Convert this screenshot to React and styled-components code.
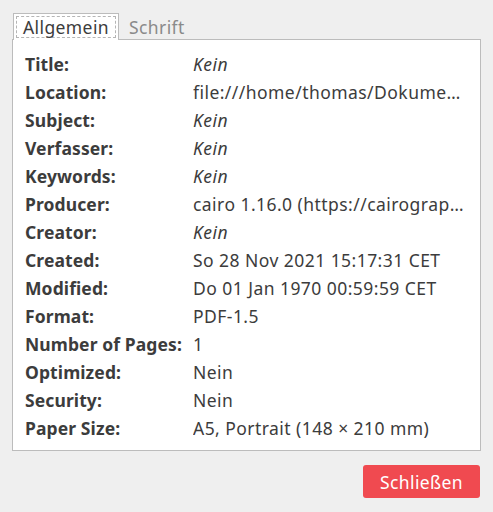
import React from "react";
import styled, { createGlobalStyle } from "styled-components";

const Global = createGlobalStyle`
  html, body { margin: 0; padding: 0; background: #efefef; }
  body { font-family: "Noto Sans", "DejaVu Sans", sans-serif; color: #3c3c3c; }
`;

const Window = styled.div`
  width: 493px;
  height: 512px;
  box-sizing: border-box;
  padding: 14px 12px 0 12px;
  display: flex;
  flex-direction: column;
`;

const TabBar = styled.div`
  display: flex;
  align-items: flex-end;
  height: 26px;
  position: relative;
  z-index: 1;
  margin-bottom: -1px;
`;

const Tab = styled.div`
  box-sizing: border-box;
  height: 27px;
  padding: 2px 2px 0 2px;
  font-size: 17.5px;
  letter-spacing: 0.4px;
  color: ${(p) => (p.$active ? "#3c3c3c" : "#8a8a8a")};
  background: ${(p) => (p.$active ? "#ffffff" : "transparent")};
  border: 1px solid ${(p) => (p.$active ? "#bcbcbc" : "transparent")};
  border-bottom: none;
  margin-left: ${(p) => (p.$active ? "1px" : "0")};
`;

const TabLabel = styled.div`
  box-sizing: border-box;
  height: 22px;
  line-height: 20px;
  padding: 0 ${(p) => (p.$active ? "6px" : "6px")};
  border: 1px dashed ${(p) => (p.$active ? "#b5b5b5" : "transparent")};
`;

const Panel = styled.div`
  box-sizing: border-box;
  height: 412px;
  background: #ffffff;
  border: 1px solid #bcbcbc;
  padding: 10px 16px 8px 12px;
`;

const Grid = styled.div`
  display: grid;
  grid-template-columns: 168px minmax(0, 1fr);
  grid-auto-rows: 28px;
  align-items: center;
  font-size: 17.5px;
  letter-spacing: 0.45px;
`;

const Label = styled.div`
  font-weight: 700;
  white-space: nowrap;
  letter-spacing: 0.1px;
`;

const Value = styled.div`
  font-style: ${(p) => (p.$italic ? "italic" : "normal")};
  white-space: nowrap;
  overflow: hidden;
  text-overflow: ellipsis;
`;

const Footer = styled.div`
  display: flex;
  justify-content: flex-end;
  padding-top: 14px;
`;

const Button = styled.button`
  width: 117px;
  height: 33px;
  border: none;
  border-radius: 3px;
  background: #f04a50;
  color: #ffffff;
  font-family: "Noto Sans", "DejaVu Sans", sans-serif;
  font-size: 17.5px;
  letter-spacing: 0.4px;
  padding: 0;
  margin-right: 1px;
`;

const rows = [
  ["Title:", "Kein", true],
  ["Location:", "file:///home/thomas/Dokumente/Dokument.pdf"],
  ["Subject:", "Kein", true],
  ["Verfasser:", "Kein", true],
  ["Keywords:", "Kein", true],
  ["Producer:", "cairo 1.16.0 (https://cairographics.org)"],
  ["Creator:", "Kein", true],
  ["Created:", "So 28 Nov 2021 15:17:31 CET"],
  ["Modified:", "Do 01 Jan 1970 00:59:59 CET"],
  ["Format:", "PDF-1.5"],
  ["Number of Pages:", "1"],
  ["Optimized:", "Nein"],
  ["Security:", "Nein"],
  ["Paper Size:", "A5, Portrait (148 × 210 mm)"],
];

export default function App() {
  return (
    <>
      <Global />
      <Window>
        <TabBar>
          <Tab $active>
            <TabLabel $active>Allgemein</TabLabel>
          </Tab>
          <Tab>
            <TabLabel>Schrift</TabLabel>
          </Tab>
        </TabBar>
        <Panel>
          <Grid>
            {rows.map(([l, v, it]) => (
              <React.Fragment key={l}>
                <Label>{l}</Label>
                <Value $italic={it}>{v}</Value>
              </React.Fragment>
            ))}
          </Grid>
        </Panel>
        <Footer>
          <Button>Schließen</Button>
        </Footer>
      </Window>
    </>
  );
}
